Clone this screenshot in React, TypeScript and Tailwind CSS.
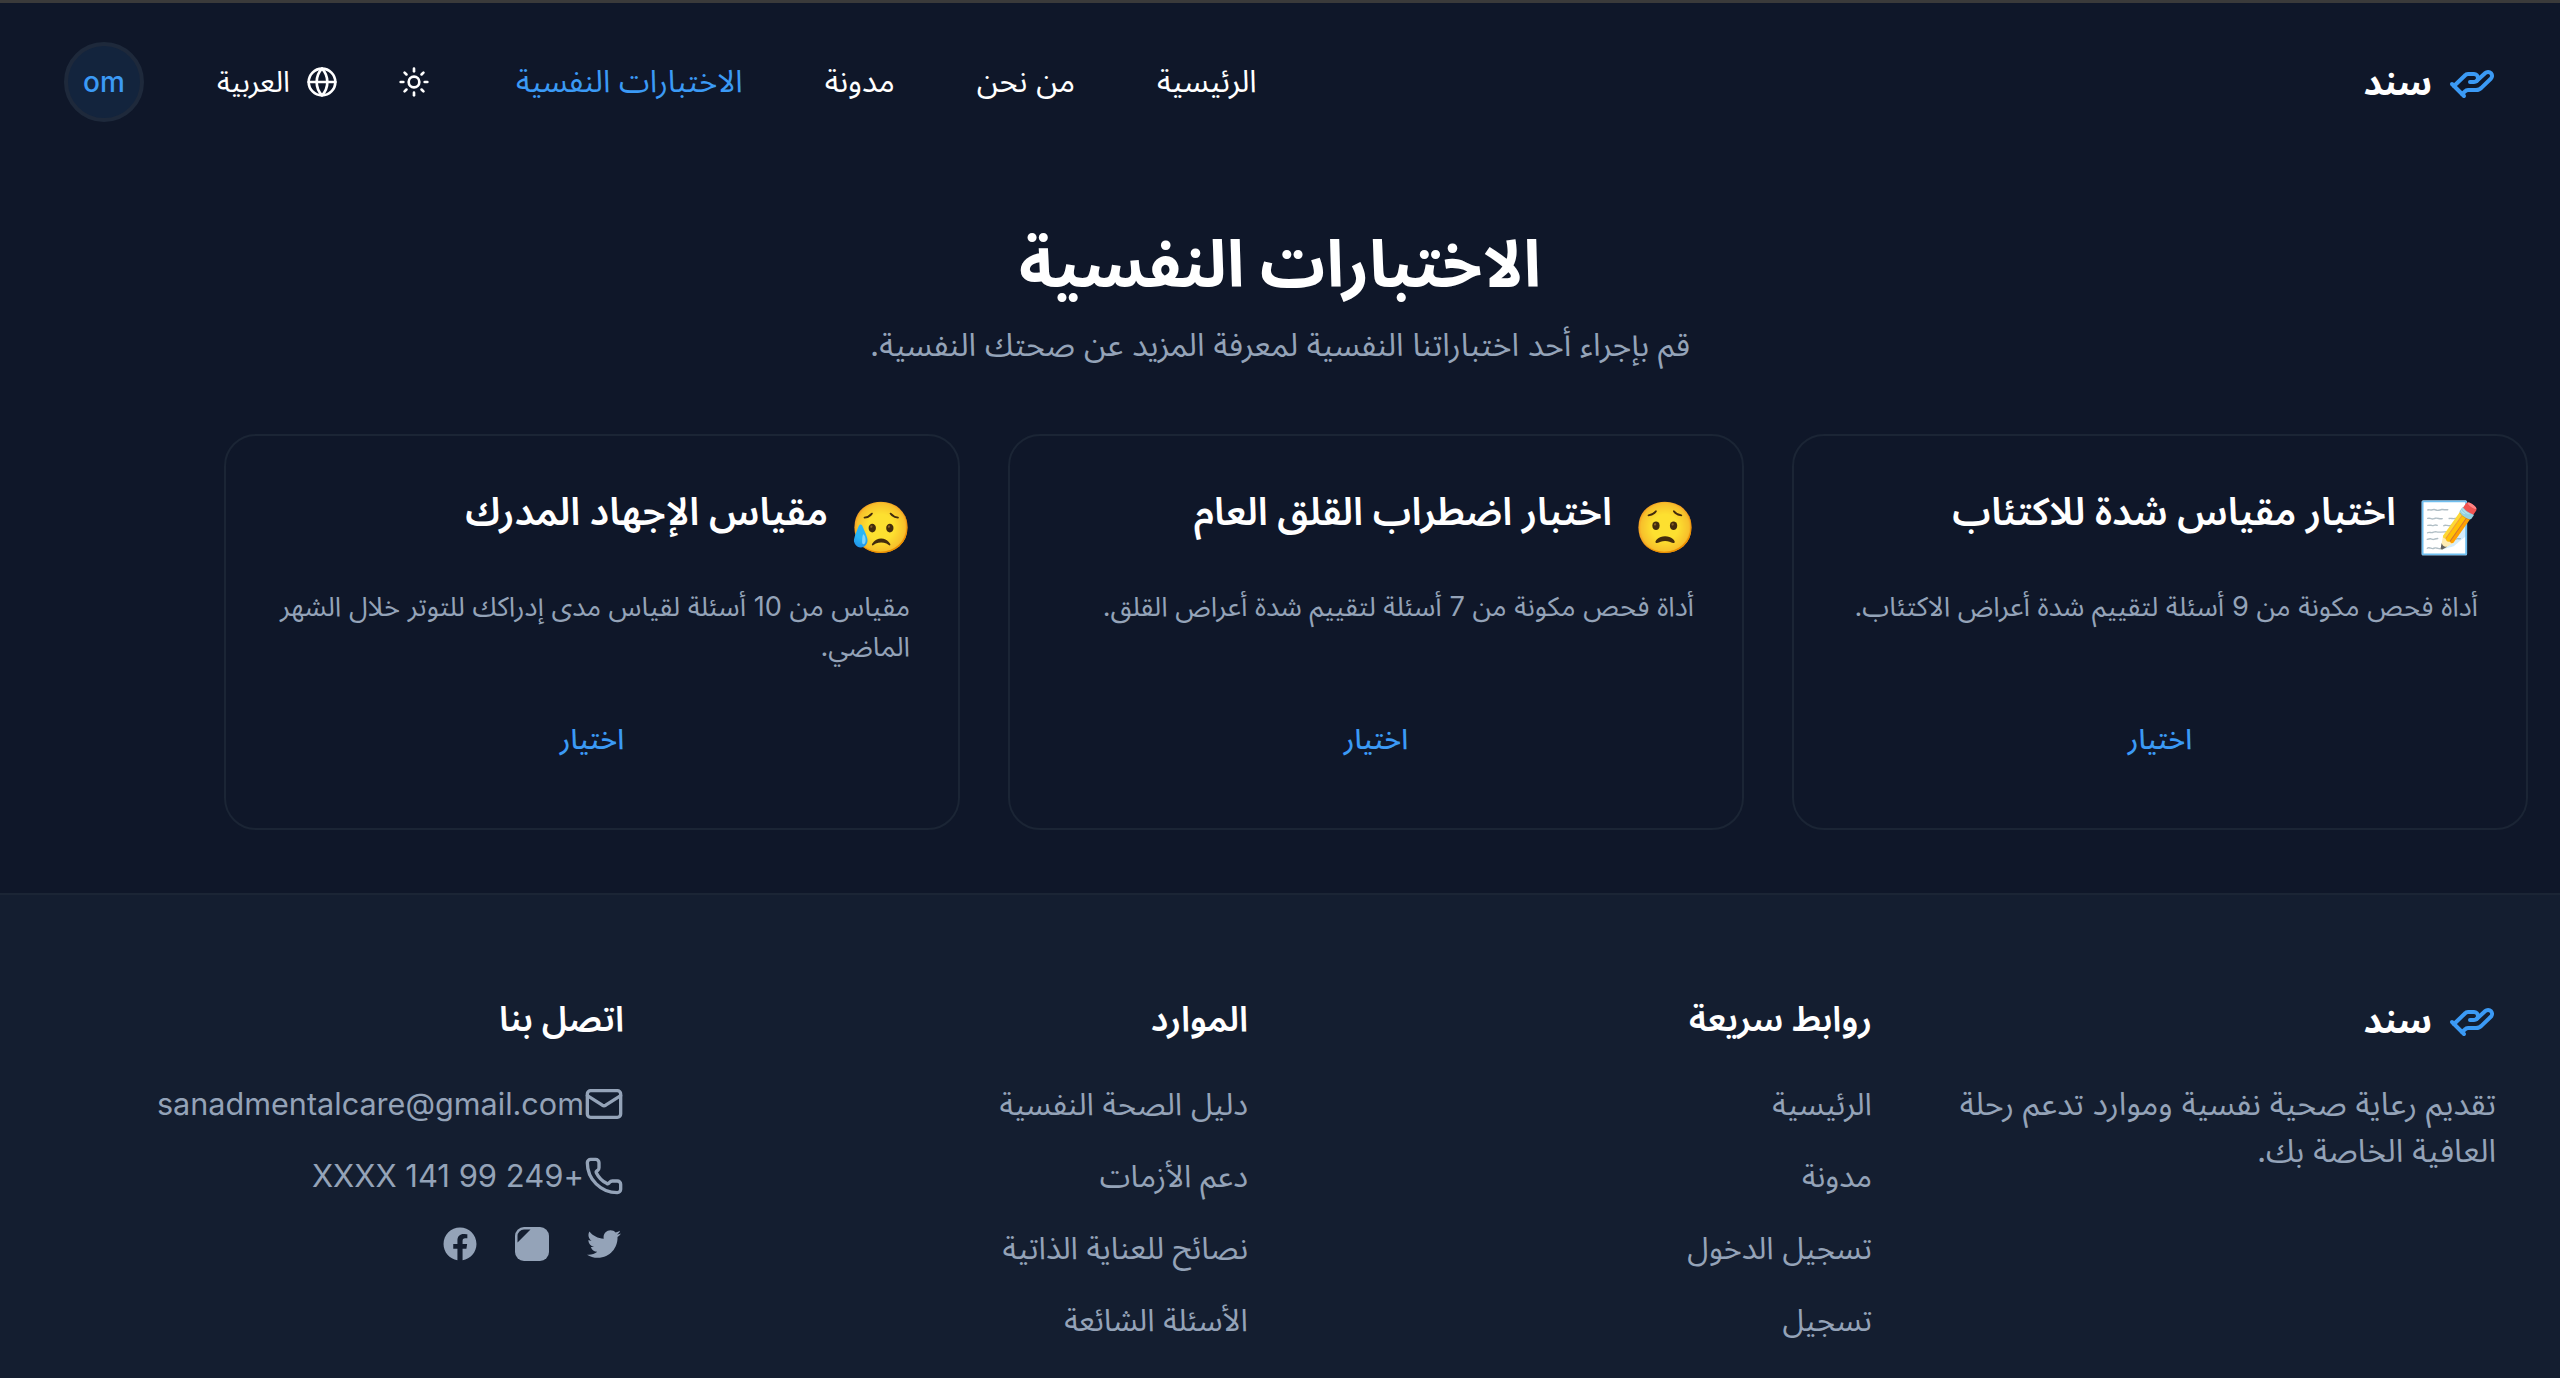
import { Globe, HandHelping, Mail, Phone, Sun } from "lucide-react";
import { FaFacebook, FaTwitter } from "react-icons/fa";

const font = "font-['Inter','Noto_Sans_Arabic','DejaVu_Sans',sans-serif]";

const navLinks = ["الرئيسية", "من نحن", "مدونة"];

const tests = [
  {
    emoji: "📝",
    title: "اختبار مقياس شدة للاكتئاب",
    desc: "أداة فحص مكونة من 9 أسئلة لتقييم شدة أعراض الاكتئاب.",
  },
  {
    emoji: "😟",
    title: "اختبار اضطراب القلق العام",
    desc: "أداة فحص مكونة من 7 أسئلة لتقييم شدة أعراض القلق.",
  },
  {
    emoji: "😥",
    title: "مقياس الإجهاد المدرك",
    desc: "مقياس من 10 أسئلة لقياس مدى إدراكك للتوتر خلال الشهر الماضي.",
  },
];

const quickLinks = ["الرئيسية", "مدونة", "تسجيل الدخول", "تسجيل"];
const resources = [
  "دليل الصحة النفسية",
  "دعم الأزمات",
  "نصائح للعناية الذاتية",
  "الأسئلة الشائعة",
];

function Logo() {
  return (
    <div className="flex items-center gap-4">
      <HandHelping size={48} strokeWidth={2} className="text-[#3b9af5]" />
      <span className="text-[36px] leading-[56px] font-bold text-white">سند</span>
    </div>
  );
}

function LinkColumn({ title, links }: { title: string; links: string[] }) {
  return (
    <div>
      <h3 className="text-[35px] leading-[56px] font-semibold text-white mb-[30px]">{title}</h3>
      <ul className="flex flex-col gap-4">
        {links.map((l) => (
          <li key={l} className="text-[31px] leading-[56px] text-[#94a3b8]">
            {l}
          </li>
        ))}
      </ul>
    </div>
  );
}

export default function App() {
  return (
    <div dir="rtl" className={`${font} h-screen overflow-hidden bg-[#0f1729] flex flex-col`}>
      <div className="h-[3px] bg-[#3a3a3a] shrink-0" />
      <header className="h-[157px] shrink-0 px-16 flex items-center justify-between">
        <Logo />
        <nav className="flex items-center">
          <div className="flex items-center gap-[82px] text-[31px] text-white">
            {navLinks.map((l) => (
              <a key={l}>{l}</a>
            ))}
            <a className="text-[#3b9af5]">الاختبارات النفسية</a>
          </div>
          <Sun size={32} className="text-white mr-[86px]" />
          <div className="flex items-center gap-4 mr-[60px] text-[29px] text-white">
            <Globe size={32} />
            <span>العربية</span>
          </div>
          <div className="w-20 h-20 mr-[73px] rounded-full bg-[#13243d] border-4 border-[#1e293b] flex items-center justify-center text-[28px] font-medium text-[#3b9af5]">
            om
          </div>
        </nav>
      </header>

      <main className="flex-1">
        <div className="text-center pt-[64px]">
          <h1 className="text-[65px] leading-[80px] font-bold text-white">الاختبارات النفسية</h1>
          <p className="text-[31.8px] leading-[48px] mt-[17px] text-[#94a3b8]">
            قم بإجراء أحد اختباراتنا النفسية لمعرفة المزيد عن صحتك النفسية.
          </p>
        </div>
        <div className="grid grid-cols-3 gap-12 mt-[65px] mr-8 ml-[224px]">
          {tests.map((t) => (
            <div
              key={t.title}
              className="h-[396px] rounded-[32px] border-2 border-[#1b2535] p-12 flex flex-col"
            >
              <div className="flex items-start gap-[27px]">
                <span className="w-[58px] h-20 mt-1 -mr-[3px] font-['Noto_Color_Emoji'] text-[50px] leading-[80px]">
                  {t.emoji}
                </span>
                <h2 className="text-[38.5px] leading-[54px] font-semibold text-white">{t.title}</h2>
              </div>
              <p className="text-[27.2px] leading-[40px] mt-[19px] text-[#94a3b8]">{t.desc}</p>
              <a className="mt-auto mb-5 text-center text-[28px] font-medium text-[#3b9af5]">اختيار</a>
            </div>
          ))}
        </div>
      </main>

      <footer className="h-[485px] shrink-0 border-t-2 border-[#1b2535] bg-[#141e30] px-16 pt-[95px]">
        <div className="grid grid-cols-4 gap-16">
          <div>
            <div className="pt-0.5">
              <Logo />
            </div>
            <p className="mt-8 text-[32px] leading-[47px] text-[#94a3b8]">
              تقديم رعاية صحية نفسية وموارد تدعم رحلة العافية الخاصة بك.
            </p>
          </div>
          <LinkColumn title="روابط سريعة" links={quickLinks} />
          <LinkColumn title="الموارد" links={resources} />
          <div>
            <h3 className="text-[35px] leading-[56px] font-semibold text-white mb-[30px]">اتصل بنا</h3>
            <div className="flex flex-col gap-4 text-[30.6px] leading-[56px] text-[#94a3b8]">
              <div className="flex items-center">
                <Mail size={40} />
                <span>sanadmentalcare@gmail.com</span>
              </div>
              <div className="flex items-center">
                <Phone size={40} />
                <span className="text-[31px]">+249 99 141 XXXX</span>
              </div>
              <div className="flex items-center gap-8 mt-1 h-10">
                <FaTwitter size={34} className="mx-[3px]" />
                <svg viewBox="0 0 34 34" className="w-[34px] h-[34px] mx-[3px]" fill="currentColor">
                  <path d="M9 0h16a9 9 0 0 1 9 9v16a9 9 0 0 1-9 9H9a9 9 0 0 1-9-9V9a9 9 0 0 1 9-9z" />
                  <path d="M2.500 15.500V9A6.500 6.500 0 0 1 9 2.500h6.500z" fill="#141e30" />
                </svg>
                <FaFacebook size={34} className="mx-[3px]" />
              </div>
            </div>
          </div>
        </div>
      </footer>
    </div>
  );
}
